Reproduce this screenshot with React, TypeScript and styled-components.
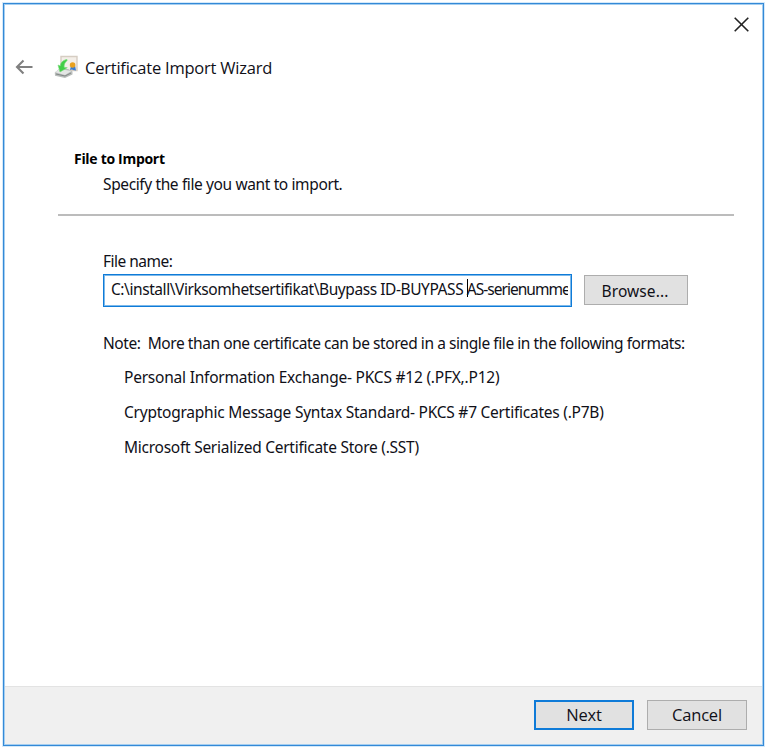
import React from 'react';
import styled, { createGlobalStyle } from 'styled-components';

const GlobalStyle = createGlobalStyle`
  * { box-sizing: border-box; }
  body { margin: 0; background: #fff; }
`;

const Page = styled.div`
  width: 768px;
  height: 750px;
  padding: 3px;
  background: #fff;
`;

const Dialog = styled.main`
  width: 761px;
  height: 743px;
  display: flex;
  flex-direction: column;
  border: 1px solid #3389d7;
  box-shadow: 0 0 0 1px #d5e9f9, inset 0 0 0 1px #a5cef0;
  background: #fff;
  color: #101018;
  font-family: "Noto Sans", Tahoma, sans-serif;
  font-size: 15.5px;
`;

const TitleBar = styled.div`
  display: flex;
  justify-content: flex-end;
  height: 40px;
  padding: 12px 13px 0 0;
`;

const Header = styled.header`
  display: flex;
  align-items: center;
  height: 46px;
  padding-left: 11px;
`;

const BackIcon = styled.svg`
  width: 18px;
  height: 16px;
  margin-right: 21px;
`;

const WizardIcon = styled.svg`
  width: 25px;
  height: 24px;
  margin-right: 6px;
`;

const Title = styled.h1`
  margin: 1px 0 0;
  font: 400 16.5px/24px "Open Sans", "Segoe UI", sans-serif;
  letter-spacing: -0.22px;
`;

const Intro = styled.section`
  height: 126px;
  margin: 0 29px 0 54px;
  padding: 58px 0 0 16px;
  border-bottom: 2px solid #bcbcbc;
`;

const Heading = styled.h2`
  margin: 0;
  color: #000;
  font: 700 14px/22px "Open Sans", "Segoe UI", sans-serif;
  letter-spacing: -0.3px;
`;

const Line = styled.p<{ $tracking: number }>`
  margin: 0;
  line-height: 24px;
  white-space: pre;
  letter-spacing: ${(p) => p.$tracking}px;
`;

const Description = styled(Line)`
  margin: 2px 0 0 29px;
`;

const Content = styled.section`
  flex: 1;
  padding: 33px 75px 0 99px;
`;

const FileRow = styled.div`
  display: flex;
  align-items: flex-start;
  justify-content: space-between;
  margin: 1px 0 24px;
`;

const FileField = styled.div`
  display: flex;
  width: 469px;
  height: 33px;
  padding: 0 3px 0 7px;
  border: 1px solid #0f7bd8;
  box-shadow: inset 0 0 0 1px #7db9ea;
  line-height: 28px;
  white-space: pre;
`;

const FieldText = styled.div`
  display: flex;
  flex: 1;
  overflow: hidden;
`;

const PathPart = styled.span<{ $tracking: number }>`
  letter-spacing: ${(p) => p.$tracking}px;
`;

const Caret = styled.span`
  flex: none;
  width: 1px;
  height: 18px;
  margin: 4px -1px 0 0;
  background: #000;
`;

const Button = styled.button<{ $primary?: boolean; $wide?: boolean }>`
  display: flex;
  align-items: center;
  justify-content: center;
  width: ${(p) => (p.$wide ? 104 : 100)}px;
  height: 30px;
  padding: 0;
  border: ${(p) => (p.$primary ? '2px solid #0f7bd8' : '1px solid #adadad')};
  background: #e1e1e1;
  color: #101018;
  font: 400 16.5px/24px "Open Sans", "Segoe UI", sans-serif;
  letter-spacing: -0.2px;
`;

const BrowseButton = styled(Button)`
  margin-top: 1px;
  padding: 2px 2px 0 0;
  font: 400 15.5px/24px "Noto Sans", Tahoma, sans-serif;
  letter-spacing: 0.1px;
`;

const Formats = styled.div`
  display: flex;
  flex-direction: column;
  gap: 11px;
  margin: 10px 0 0 21px;
`;

const Footer = styled.footer`
  display: flex;
  justify-content: flex-end;
  gap: 13px;
  height: 58px;
  margin: 0 1px 1px;
  padding: 13px 15px 0 0;
  border-top: 1px solid #e3e3e3;
  background: #f0f0f0;
`;

const formats = [
  { text: 'Personal Information Exchange- PKCS #12 (.PFX,.P12)', tracking: -0.22 },
  { text: 'Cryptographic Message Syntax Standard- PKCS #7 Certificates (.P7B)', tracking: -0.24 },
  { text: 'Microsoft Serialized Certificate Store (.SST)', tracking: -0.26 },
];

export default function App() {
  return (
    <Page>
      <GlobalStyle />
      <Dialog>
        <TitleBar>
          <svg width="17" height="17" viewBox="0 0 17 17" aria-label="Close">
            <path d="M1.7 1.7l13.6 13.6M15.3 1.7L1.7 15.3" stroke="#222" strokeWidth="1.6" fill="none" />
          </svg>
        </TitleBar>
        <Header>
          <BackIcon viewBox="0 0 18 16">
            <path d="M17.5 8H2M8.5 1.5L2 8l6.5 6.5" stroke="#808080" strokeWidth="2.1" fill="none" />
          </BackIcon>
          <WizardIcon viewBox="0 0 25 24">
            <path d="M7 1.5h16v14H7z" fill="#f4efe9" stroke="#d6cdc3" strokeWidth="1.4" />
            <path d="M17 11l-1 4 2-.5 1 .5 3 .5-1-5z" fill="#397bd0" />
            <circle cx="18.6" cy="10" r="2.8" fill="#e9a11f" />
            <path d="M0.8 17.5L5 14h9l4.5 2.5v3L11 23 1 20.8z" fill="#b9bdbb" />
            <path d="M1 17.3L5.5 14l12 2-6.5 4z" fill="#e3e6e4" />
            <path d="M2 19l9 2 6-3" fill="none" stroke="#838887" strokeWidth="1" />
            <path d="M13 4.5C8.5 5.2 6.5 8 6.3 11L4 10l2 7 7.3-4.3-3.2-.4C10 9 11.2 7 13.2 5.6z" fill="#42ce47" stroke="#77dc78" strokeWidth=".6" />
          </WizardIcon>
          <Title>Certificate Import Wizard</Title>
        </Header>
        <Intro>
          <Heading>File to Import</Heading>
          <Description $tracking={-0.38}>Specify the file you want to import.</Description>
        </Intro>
        <Content>
          <Line $tracking={-0.52}>File name:</Line>
          <FileRow>
            <FileField>
              <FieldText>
                <PathPart $tracking={-0.43}>{'C:\\install\\Virksomhetsertifikat\\Buypass ID-BUYPASS '}</PathPart>
                <Caret />
                <PathPart $tracking={-0.98}>AS-serienumme</PathPart>
              </FieldText>
            </FileField>
            <BrowseButton $wide>Browse...</BrowseButton>
          </FileRow>
          <Line $tracking={-0.43}>
            {'Note:  More than one certificate can be stored in a single file in the following formats:'}
          </Line>
          <Formats>
            {formats.map((f) => (
              <Line key={f.text} $tracking={f.tracking}>{f.text}</Line>
            ))}
          </Formats>
        </Content>
        <Footer>
          <Button $primary>Next</Button>
          <Button>Cancel</Button>
        </Footer>
      </Dialog>
    </Page>
  );
}
